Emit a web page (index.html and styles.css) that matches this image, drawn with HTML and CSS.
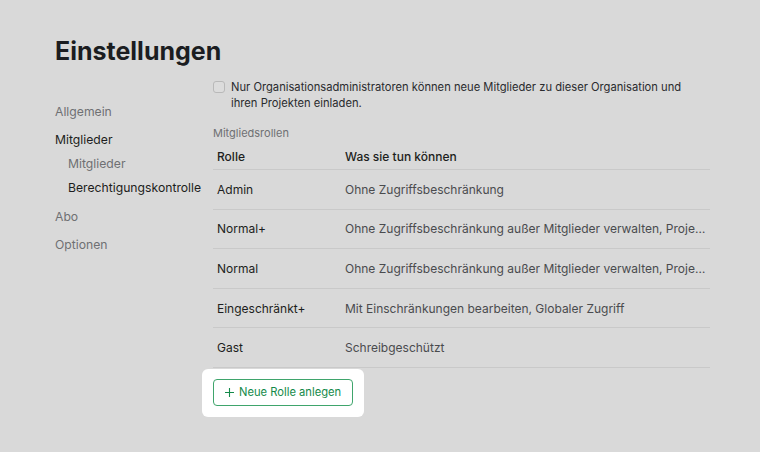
FILE: index.html
```html
<!DOCTYPE html>
<html lang="de">
<head>
<meta charset="utf-8">
<title>Einstellungen</title>
<link rel="stylesheet" href="styles.css">
</head>
<body>
<div class="page">
  <h1 class="title">Einstellungen</h1>
  <div class="layout">
    <nav class="sidebar">
      <a class="nav-item">Allgemein</a>
      <a class="nav-item active">Mitglieder</a>
      <div class="sub-list">
        <a class="sub-item">Mitglieder</a>
        <a class="sub-item active">Berechtigungskontrolle</a>
      </div>
      <a class="nav-item">Abo</a>
      <a class="nav-item">Optionen</a>
    </nav>
    <main class="content">
      <label class="check-row">
        <span class="checkbox"></span>
        <span class="check-text">Nur Organisationsadministratoren können neue Mitglieder zu dieser Organisation und ihren Projekten einladen.</span>
      </label>
      <div class="section-label">Mitgliedsrollen</div>
      <div class="table">
        <div class="row head">
          <div class="cell role">Rolle</div>
          <div class="cell desc">Was sie tun können</div>
        </div>
        <div class="row">
          <div class="cell role">Admin</div>
          <div class="cell desc">Ohne Zugriffsbeschränkung</div>
        </div>
        <div class="row">
          <div class="cell role">Normal+</div>
          <div class="cell desc">Ohne Zugriffsbeschränkung außer Mitglieder verwalten, Projekte erstellen</div>
        </div>
        <div class="row">
          <div class="cell role">Normal</div>
          <div class="cell desc">Ohne Zugriffsbeschränkung außer Mitglieder verwalten, Projekte erstellen und löschen</div>
        </div>
        <div class="row">
          <div class="cell role">Eingeschränkt+</div>
          <div class="cell desc">Mit Einschränkungen bearbeiten, Globaler Zugriff</div>
        </div>
        <div class="row">
          <div class="cell role">Gast</div>
          <div class="cell desc">Schreibgeschützt</div>
        </div>
      </div>
      <div class="spotlight">
        <button class="add-btn" type="button">
          <svg class="plus" width="9" height="9" viewBox="0 0 9 9" aria-hidden="true"><path d="M4.5 0V9M0 4.5H9" stroke="currentColor" stroke-width="1.1" fill="none"/></svg>
          <span>Neue Rolle anlegen</span>
        </button>
      </div>
    </main>
  </div>
</div>
</body>
</html>
```

FILE: styles.css
```css
* { box-sizing: border-box; }
html, body {
  margin: 0;
  background: #d9d9d9;
  font-family: "Inter", "Noto Sans", sans-serif;
  color: #1d1e20;
}
.page {
  padding: 36px 0 0 55px;
  width: 760px;
  height: 452px;
  overflow: hidden;
}
.title {
  margin: 0;
  font-size: 25px;
  line-height: 30px;
  font-weight: 700;
  color: #1b1d21;
}
.layout {
  display: grid;
  grid-template-columns: 158px 497px;
  margin-top: 13px;
}
.sidebar {
  display: flex;
  flex-direction: column;
  padding-top: 19px;
  font-size: 12.2px;
}
.nav-item {
  line-height: 28px;
  color: #6f7073;
}
.nav-item.active { color: #1d1e20; margin-bottom: -2px; }
.sub-list {
  display: flex;
  flex-direction: column;
  padding-left: 13px;
  margin-bottom: 3px;
}
.sub-item {
  line-height: 24px;
  color: #6f7073;
  white-space: nowrap;
}
.sub-item.active { color: #1d1e20; }
.content {
  display: flex;
  flex-direction: column;
  align-items: flex-start;
}
.check-row {
  display: flex;
  gap: 6px;
  font-size: 11.2px;
  line-height: 16px;
  color: #2a2b2e;
  padding-right: 20px;
}
.checkbox {
  flex: none;
  width: 12px;
  height: 12px;
  margin-top: 2px;
  border: 1px solid #b9b9b9;
  border-radius: 3px;
  background: #dcdcdc;
}
.section-label {
  margin-top: 14px;
  font-size: 11px;
  line-height: 16px;
  color: #6f7073;
}
.table {
  width: 497px;
  margin-top: 4px;
}
.row {
  display: grid;
  grid-template-columns: 128px 1fr;
  height: 39.6px;
  align-items: center;
  border-bottom: 1px solid #c9c9c9;
  font-size: 12px;
}
.row.head {
  height: 25px;
  align-items: start;
  font-weight: 500;
  color: #1d1e20;
}
.cell {
  padding: 0 3px 0 4px;
  white-space: nowrap;
  overflow: hidden;
  text-overflow: ellipsis;
}
.row.head .cell { line-height: 24px; }
.role { color: #1d1e20; }
.row:not(.head) .desc { color: #4a4b4e; }
.spotlight {
  margin: 1px 0 0 -11px;
  padding: 10px 11px 11px;
  background: #ffffff;
  border-radius: 6px;
}
.add-btn {
  display: flex;
  align-items: center;
  gap: 5px;
  height: 27px;
  padding: 0 11px;
  border: 1px solid #3fa56c;
  border-radius: 4px;
  background: #ffffff;
  color: #148a4a;
  font-family: "Inter", "Noto Sans", sans-serif;
  font-size: 11.2px;
  cursor: pointer;
}
.plus { flex: none; }
```
